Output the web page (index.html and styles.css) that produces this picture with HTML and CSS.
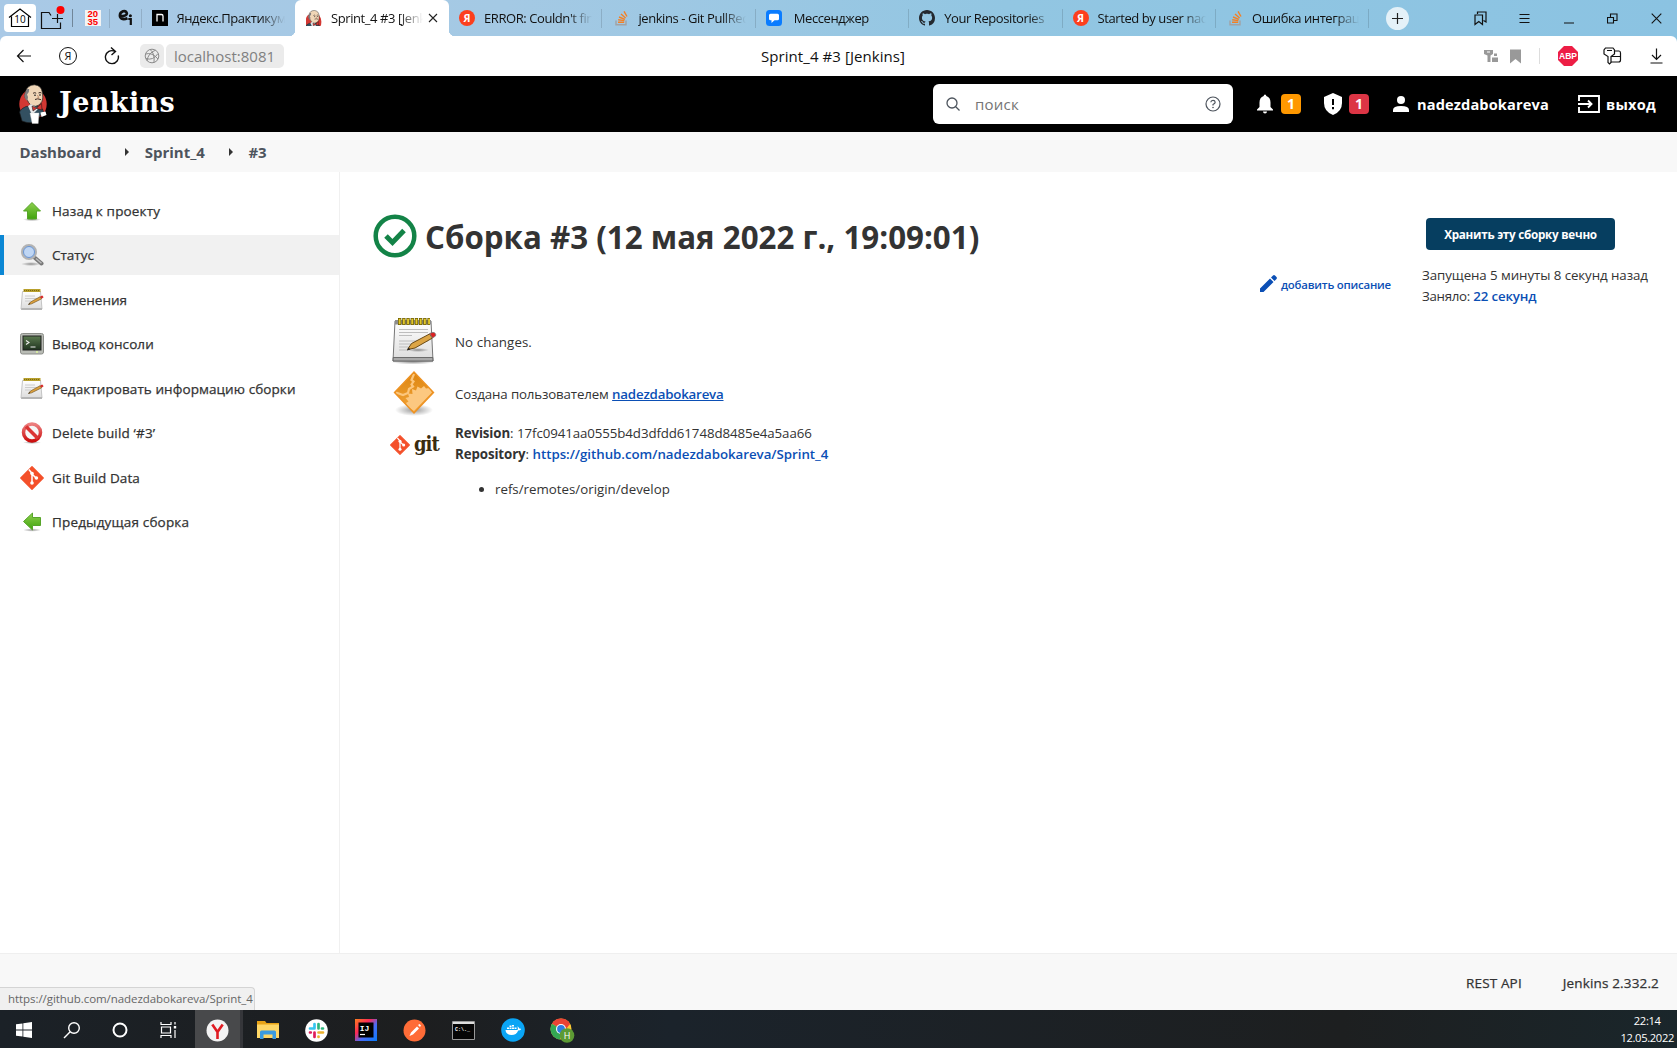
FILE: index.html
```html
<!DOCTYPE html>
<html lang="ru">
<head>
<meta charset="utf-8">
<title>Sprint_4 #3 [Jenkins]</title>
<link rel="stylesheet" href="styles.css">
</head>
<body>
<svg class="defs" width="0" height="0" aria-hidden="true">
  <defs>
    <linearGradient id="green" x1="0" y1="0" x2="0" y2="1"><stop offset="0" stop-color="#8fd04f"/><stop offset="1" stop-color="#3fa30c"/></linearGradient>
    <linearGradient id="paper" x1="0" y1="0" x2="0" y2="1"><stop offset="0" stop-color="#fff"/><stop offset="1" stop-color="#dcdcdc"/></linearGradient>
    <linearGradient id="orange" x1="0" y1="0" x2="0" y2="1"><stop offset="0" stop-color="#dd850f"/><stop offset="1" stop-color="#f2a63c"/></linearGradient>
    <linearGradient id="red" x1="0" y1="0" x2="0" y2="1"><stop offset="0" stop-color="#ec8080"/><stop offset="1" stop-color="#cc0f0f"/></linearGradient>
    <linearGradient id="screen" x1="0" y1="0" x2="0" y2="1"><stop offset="0" stop-color="#5b7a4f"/><stop offset="1" stop-color="#1f331f"/></linearGradient>
    <linearGradient id="ij" x1="0" y1="0" x2="1" y2="1"><stop offset="0" stop-color="#fc801d"/><stop offset=".35" stop-color="#fe2857"/><stop offset=".6" stop-color="#4a6cf7"/><stop offset="1" stop-color="#087cfa"/></linearGradient>
    <radialGradient id="shade"><stop offset="0" stop-color="#000" stop-opacity=".4"/><stop offset="1" stop-color="#000" stop-opacity="0"/></radialGradient>
    <symbol id="notepad-s" viewBox="0 0 24 24">
      <path d="M2.500 3.500h18l1.500 17.500H1z" fill="url(#paper)" stroke="#c4c4c4"/>
      <path d="M1.500 20h20.500v2H1z" fill="#b5b5b5"/>
      <path d="M3.500 1h17v3h-17z" fill="#b8a02c"/><path d="M4 2.500h16" stroke="#7d6a14" stroke-width="1" stroke-dasharray="1 1"/>
      <path d="M5 8h10M5 10.500h12M5 13h6" stroke="#ccc"/>
      <path d="M8.500 16.500l2-2.500 9.500-5.200 1.600 2-10 5z" fill="#dfa23c" stroke="#7a5a25" stroke-width=".7"/>
      <path d="M8.300 16.700l1.800-.6-.8-1.200z" fill="#333"/><path d="M20 8.500l2.300-1 1.300 1.800-2 1.400z" fill="#d62b2b"/>
    </symbol>
    <symbol id="notepad" viewBox="0 0 48 48">
      <ellipse cx="23" cy="45" rx="22" ry="2.500" fill="url(#shade)"/>
      <path d="M5 4h36l2 40H3z" fill="url(#paper)" stroke="#777"/>
      <path d="M3.200 40.500h39.600l.2 3.500H3z" fill="#a9a9a9" stroke="#555" stroke-width=".8"/>
      <path d="M5 3h36v4.500H5z" fill="#8d8d8d"/>
      <path d="M8 4.500h32" stroke="#6b5b00" stroke-width="7" stroke-dasharray="3.300 .9"/>
      <path d="M8.700 4.500h32" stroke="#e0c62a" stroke-width="5.500" stroke-dasharray="1.900 2.300"/>
      <path d="M9 12.500h29M9 15.500h29M9 18.500h13M9 24h29M9 27h20M9 30h12M9 33h9" stroke="#bdbdbd" stroke-width="1.200"/>
      <ellipse cx="28" cy="33" rx="11" ry="2" fill="url(#shade)"/>
      <path d="M17.500 32.500l4-6 18-9.500 3 4L25 31z" fill="#dca545" stroke="#6b4a14"/>
      <path d="M17 33.500l3.500-1-2-2z" fill="#222"/><path d="M39.500 16.500l3.500-1.200q3.500.8 2.500 3.700L42.500 21z" fill="#d22" stroke="#777" stroke-width=".8"/>
    </symbol>
    <symbol id="git" viewBox="0 0 24 24">
      <path d="M12 .8L23.200 12 12 23.200.8 12z" fill="#f4502a" stroke="#f4502a" stroke-width="1.400" stroke-linejoin="round"/>
      <path d="M8.800 3.500L12 7.200v9.800M12 8l4.300 4.300" stroke="#fff" stroke-width="1.500" fill="none"/>
      <circle cx="12" cy="7.500" r="1.800" fill="#fff"/><circle cx="16.400" cy="12" r="1.800" fill="#fff"/><circle cx="12" cy="17" r="1.800" fill="#fff"/>
    </symbol>
    <symbol id="face" viewBox="0 0 28 40">
      <ellipse cx="14" cy="20" rx="13.700" ry="15" fill="#d33833"/>
      <path d="M7 22.500q-5 2-6.500 5.500l2.500 9q6 2.500 10 1.500l8-6.500 3.500-4-1-3-6-3.500z" fill="#335061" stroke="#1c1c1c" stroke-width=".6"/>
      <path d="M6.500 8Q8 1 15.500.8q7 .5 8 8 .8 6-.5 8.500-2 4.500-6.500 5-6-.5-8-6Q4.500 14 6.500 8z" fill="#f0d6b7" stroke="#222" stroke-width=".7"/>
      <path d="M6.300 9q-1.800 3 .4 6.500l1.700 1.500.6-4-1-2.500q2.500-2 2.200-5.500L8.500 5Q6.800 6.500 6.300 9z" fill="#7d7b7d"/>
      <path d="M14 9.300q2-1.300 3.200 0M19.500 9q1.500-1 3 0M16 15.500q2.500-1.500 6 .2" stroke="#3b2b24" fill="none"/>
      <path d="M15 11.200h2M20 11h2" stroke="#222" stroke-width="1"/><path d="M18.500 11l1.300 2.800-1.800.3" stroke="#b37c5c" stroke-width=".8" fill="none"/>
      <path d="M12 20l7 5-6 6-4-9z" fill="#e8e8e8"/>
      <path d="M13 22l4.500 2L22.500 19.500l.5 6.500-5.500-1.500L14 27z" fill="#d33833" stroke="#111" stroke-width=".5"/>
      <path d="M11 29h9l-.8 10.500h-6z" fill="#fff" stroke="#ccc" stroke-width=".4"/><path d="M21.500 28.500l5-1 1 3.500-5 2z" fill="#fff"/>
    </symbol>
    <symbol id="face-head" viewBox="4 0 22 27"><use href="#face" width="28" height="40"/></symbol>
    <symbol id="so" viewBox="0 0 16 16">
      <path d="M2 10.500v4.200h10v-4.200" fill="none" stroke="#a2a2a4" stroke-width="1.400"/>
      <path d="M4 12.300h6.200M4.200 9.800l6.200.8M5 7l5.900 2.300M7 4l4.600 4M10 1.300l3 5.200" stroke="#f48024" stroke-width="1.400" fill="none"/>
    </symbol>
  </defs>
</svg>

<header class="browser">
  <div class="tabs">
    <div class="pin home"><span class="home-box">
      <svg width="24" height="20" viewBox="0 0 24 20"><path d="M3.500 8.500v10h17v-10M1 9.500L12 1l11 8.500" fill="none" stroke="#000" stroke-width="1.200"/><text x="12" y="15" text-anchor="middle" class="home-num">10</text></svg></span></div>
    <div class="pin folder"><svg width="26" height="28" viewBox="0 0 26 28"><path d="M12 11.500l-2-3H2.500v16h19v-6M18.500 10v9M13 14.500h11" fill="none" stroke="#111" stroke-width="1.200"/><circle cx="21.500" cy="6" r="4" fill="#f00"/></svg></div>
    <div class="pin sep fav-cell"><span class="fav fav-2035">20<br>35</span></div>
    <div class="pin sep"><svg width="16" height="18" viewBox="0 0 16 18"><path d="M2 7.200Q9.500 7 8.800 4.200 8 1.600 5 2.300 1.300 3.800 2 7.600 4 11.500 9.500 9.200" fill="none" stroke="#111" stroke-width="2.600"/><path d="M10.300 10h2.500v6" fill="none" stroke="#111" stroke-width="2.200"/><circle cx="12.400" cy="6.800" r="1.500" fill="#111"/></svg></div>
    <div class="tab"><svg class="fav" viewBox="0 0 16 16"><path d="M0 0h16v16H0z"/><path d="M5 11.500v-7h4.500q1.500 0 1.500 1.500v5.500" fill="none" stroke="#fff" stroke-width="1.300"/></svg><span class="label">Яндекс.Практикум</span></div>
    <div class="tab active"><svg class="fav"><use href="#face-head"/></svg><span class="label">Sprint_4 #3 [Jenkins]</span><svg class="close" viewBox="0 0 10 10"><path d="M1 1l8 8M9 1L1 9" stroke="#222" stroke-width="1.100"/></svg></div>
    <div class="tab sep"><span class="fav ya">Я</span><span class="label">ERROR: Couldn't find any</span></div>
    <div class="tab sep so"><svg class="fav"><use href="#so"/></svg><span class="label">jenkins - Git PullRequest</span></div>
    <div class="tab sep msg"><svg class="fav" viewBox="0 0 16 16"><rect width="16" height="16" rx="3.500" fill="#0a7cff"/><path d="M4.500 3.800h7q1.500 0 1.500 1.500v3.400q0 1.500-1.500 1.500H8.500L5.500 13v-2.800h-1Q3 10.200 3 8.700V5.300q0-1.500 1.500-1.500z" fill="#fff"/></svg><span class="label">Мессенджер</span></div>
    <div class="tab sep"><svg class="fav" viewBox="0 0 16 16"><path fill="#24292f" d="M8 0C3.580 0 0 3.580 0 8c0 3.540 2.290 6.530 5.470 7.590.4.070.55-.17.55-.38 0-.19-.01-.82-.01-1.490-2.010.37-2.530-.49-2.690-.94-.09-.23-.48-.94-.82-1.130-.28-.15-.68-.52-.01-.53.63-.01 1.080.58 1.230.82.72 1.210 1.870.87 2.330.66.07-.52.28-.87.51-1.070-1.780-.2-3.640-.89-3.640-3.950 0-.87.31-1.590.82-2.150-.08-.2-.36-1.020.08-2.120 0 0 .67-.21 2.200.82.64-.18 1.320-.27 2-.27s1.360.09 2 .27c1.530-1.040 2.200-.82 2.200-.82.44 1.100.16 1.920.08 2.120.51.56.82 1.270.82 2.150 0 3.070-1.870 3.750-3.650 3.950.29.25.54.73.54 1.480 0 1.070-.01 1.930-.01 2.200 0 .21.15.46.55.38A8.010 8.010 0 0016 8c0-4.420-3.580-8-8-8z"/></svg><span class="label">Your Repositories</span></div>
    <div class="tab sep"><span class="fav ya">Я</span><span class="label">Started by user nadezda</span></div>
    <div class="tab sep so"><svg class="fav"><use href="#so"/></svg><span class="label">Ошибка интеграции</span></div>
    <div class="winctl">
      <span class="plus"><svg width="23" height="23" viewBox="0 0 23 23"><path d="M11.500 6v11M6 11.500h11" stroke="#222" stroke-width="1.200"/></svg></span>
      <svg class="w1" width="13" height="15" viewBox="0 0 13 15"><path d="M3.500 3V1h8.500v10l-2.500-1.500M1 4h7.500v9.500L4.800 10.500 1 13.500z" fill="none" stroke="#111" stroke-width="1.200"/></svg>
      <svg class="w2" width="11" height="11" viewBox="0 0 11 11"><path d="M.5 1.500h10M.5 5.500h10M.5 9.500h10" stroke="#111"/></svg>
      <svg class="w3" width="10" height="11" viewBox="0 0 10 11"><path d="M0 10h10" stroke="#111"/></svg>
      <svg class="w4" width="11" height="11" viewBox="0 0 11 11"><path d="M.5 4.500h6v5.500h-6zM3.500 4.500v-3.500h6.500v6.500H6.500" fill="none" stroke="#111" stroke-width="1.100"/></svg>
      <svg class="w5" width="11" height="11" viewBox="0 0 11 11"><path d="M.7.7l9.600 9.600M10.300.7L.7 10.300" stroke="#111" stroke-width="1.100"/></svg>
    </div>
  </div>
  <div class="toolbar">
    <svg class="t-back" width="16" height="14" viewBox="0 0 16 14"><path d="M15 7H1.500M7.500 1l-6 6 6 6" fill="none" stroke="#111" stroke-width="1.200"/></svg>
    <span class="t-ya">Я</span>
    <svg class="t-rel" width="16" height="18" viewBox="0 0 16 18"><path d="M14.200 8.500A6.500 6.500 0 1 1 10.500 4.200M7 .5l4.500 4L7.500 8" fill="none" stroke="#111" stroke-width="1.400"/></svg>
    <span class="globe"><svg width="16" height="16" viewBox="0 0 16 16"><g fill="none" stroke="#8b8b8b"><circle cx="8" cy="8" r="6.800"/><path d="M1.500 6Q8 4 14 11M3 13Q4 5 11.500 2.200M2 10.500q7 2.500 12-5M6 1.500Q11 5 10 14.500"/></g></svg></span>
    <span class="url">localhost:8081</span>
    <span class="page-title">Sprint_4 #3 [Jenkins]</span>
    <svg class="r1" width="14" height="14" viewBox="0 0 14 14"><path d="M0 1h9v4L6.500 6.500V13H3.500V6.500L0 5z" fill="#999"/><path d="M3 3h3" stroke="#fff"/><path d="M8 8.500h6V13H8zM10 4.500h3V7h-3z" fill="#999"/></svg>
    <svg class="r2" width="11" height="15" viewBox="0 0 11 15"><path d="M0 .5h11v14L5.500 10 0 14.500z" fill="#999"/></svg>
    <span class="tsep"></span>
    <svg class="r3" width="20" height="20" viewBox="0 0 20 20"><path d="M6 0h8l6 6v8l-6 6H6l-6-6V6z" fill="#ed1e45"/><text x="10" y="13.300" text-anchor="middle" textLength="18" lengthAdjust="spacingAndGlyphs" class="abp">ABP</text></svg>
    <svg class="r4" width="19" height="18" viewBox="0 0 19 18"><g fill="none" stroke="#111" stroke-width="1.200"><path d="M2.500 1h7.500L11.500 3v4L8 9.500v6L6.500 17 5 15.500v-6L1 7V3zM4 3.500h5"/><path d="M12 4h4q1.500 0 1.500 2v7q0 2-2 2H8M8 9.500h9.500"/></g></svg>
    <svg class="r5" width="13" height="16" viewBox="0 0 13 16"><path d="M6.500.5v11M2 7l4.500 4.500L11 7M.5 15h12" fill="none" stroke="#111" stroke-width="1.200"/></svg>
  </div>
</header>

<div class="jheader">
  <svg class="logo" width="28" height="40"><use href="#face"/></svg>
  <span class="brand">Jenkins</span>
  <div class="search">
    <svg width="14" height="14" viewBox="0 0 14 14"><circle cx="6" cy="6" r="5" fill="none" stroke="#4d545d" stroke-width="1.300"/><path d="M9.500 9.500l4 4" stroke="#4d545d" stroke-width="1.300"/></svg>
    <span class="ph">поиск</span>
    <svg width="16" height="16" viewBox="0 0 16 16"><circle cx="8" cy="8" r="7" fill="none" stroke="#4d545d" stroke-width="1.200"/><path d="M5.800 6.300Q6 4.300 8 4.300t2.200 1.900Q10.200 7.300 8 8.500v1" fill="none" stroke="#4d545d" stroke-width="1.200"/><circle cx="8" cy="11.500" r=".8" fill="#4d545d"/></svg>
  </div>
  <svg class="bell" width="16" height="20" viewBox="0 0 16 20"><path d="M8 .5q1.300 0 1.300 1.600Q13.500 3.500 13.500 8.500V13l2.500 2.500v1H0v-1L2.500 13V8.500q0-5 4.200-6.400Q6.700.5 8 .5zM6 17.500h4q0 2-2 2t-2-2z" fill="#fff"/></svg>
  <span class="badge orange">1</span>
  <svg class="shield" width="18" height="22" viewBox="0 0 18 22"><path d="M9 0l9 4v6q0 8.500-9 12Q0 18.500 0 10V4z" fill="#fff"/><path d="M9 6v6M9 14v2.200" stroke="#000" stroke-width="2"/></svg>
  <span class="badge red">1</span>
  <svg class="user" width="16" height="16" viewBox="0 0 16 16"><circle cx="8" cy="4" r="4" fill="#fff"/><path d="M0 16v-2q0-4 8-4t8 4v2z" fill="#fff"/></svg>
  <span class="hlink">nadezdabokareva</span>
  <svg class="exit" width="22" height="18" viewBox="0 0 22 18"><path d="M1 6V1h20v16H1v-5M0 9h13.500M10 5.500L13.500 9 10 12.500" fill="none" stroke="#fff" stroke-width="1.900"/></svg>
  <span class="hlink out">выход</span>
</div>

<nav class="crumbs">
  <span>Dashboard</span><b class="arr"></b><span>Sprint_4</span><b class="arr"></b><span>#3</span>
</nav>

<div class="page">
  <aside>
    <a class="task"><svg width="24" height="24" viewBox="0 0 24 24"><ellipse cx="12" cy="20.500" rx="9" ry="1.700" fill="url(#shade)"/><path d="M12 3.500l8.500 8.500h-4v8h-9v-8h-4z" fill="url(#green)" stroke="#57a52a"/></svg><span class="wide">Назад к проекту</span></a>
    <a class="task on"><svg width="24" height="24" viewBox="0 0 24 24"><ellipse cx="11" cy="21" rx="10" ry="2" fill="url(#shade)"/><path d="M14.500 14.500l7 6" stroke="#777" stroke-width="4" stroke-linecap="round"/><path d="M16 15.500l5.500 4.700" stroke="#bbb" stroke-width="1.500"/><circle cx="9" cy="9" r="6.900" fill="#aecdf2" stroke="#b3b3b3" stroke-width="2.200"/><circle cx="9" cy="9" r="5.500" fill="#bfd6f4" stroke="#6b94cf"/></svg><span>Статус</span></a>
    <a class="task"><svg width="24" height="24"><use href="#notepad-s"/></svg><span>Изменения</span></a>
    <a class="task"><svg width="24" height="24" viewBox="0 0 24 24"><rect x=".5" y="1.500" width="23" height="20.500" rx="2" fill="#b9bcb5" stroke="#8b8d88"/><rect x="3" y="4" width="18" height="14" fill="url(#screen)" stroke="#222"/><path d="M6 8.500l3 2-3 2M10.500 15h5" fill="none" stroke="#eee" stroke-width="1.100"/><circle cx="17" cy="20" r=".9" fill="#e5ff9a"/></svg><span class="mid">Вывод консоли</span></a>
    <a class="task"><svg width="24" height="24"><use href="#notepad-s"/></svg><span class="mid">Редактировать информацию сборки</span></a>
    <a class="task"><svg width="24" height="24" viewBox="0 0 24 24"><ellipse cx="12" cy="21.500" rx="9" ry="1.500" fill="url(#shade)"/><circle cx="12" cy="11.500" r="8.500" fill="#f6f6f6" stroke="url(#red)" stroke-width="3.500"/><path d="M6 5.500l12 12" stroke="#db3535" stroke-width="3.500"/></svg><span class="wide">Delete build ‘#3’</span></a>
    <a class="task"><svg width="24" height="24"><use href="#git"/></svg><span class="mid">Git Build Data</span></a>
    <a class="task"><svg width="24" height="24" viewBox="0 0 24 24"><ellipse cx="12" cy="20" rx="9" ry="1.700" fill="url(#shade)"/><path d="M3.500 11.500l9-8.500v4.500h8v8h-8V20z" fill="url(#green)" stroke="#57a52a"/></svg><span class="wide">Предыдущая сборка</span></a>
  </aside>
  <main>
    <section class="left">
      <h1><svg width="44" height="44" viewBox="0 0 44 44"><circle cx="22" cy="22" r="19.300" fill="none" stroke="#138347" stroke-width="4.500"/><path d="M13 22l6.500 6.500L31 16.500" fill="none" stroke="#138347" stroke-width="5"/></svg><span>Сборка #3 (12 мая 2022 г., 19:09:01)</span></h1>
      <div class="row r-changes"><svg width="48" height="48"><use href="#notepad"/></svg><p>No changes.</p></div>
      <div class="row r-user"><svg width="48" height="48" viewBox="0 0 48 48"><ellipse cx="24" cy="41" rx="19" ry="6" fill="url(#shade)"/><path d="M24 3L43.500 23.500 24 44 4.500 23.500z" fill="url(#orange)"/><path d="M24 5l-2.500 6 2 1.500-2 3 1.500 2-4 2.500-1 4-5 2-7-2.500" fill="none" stroke="#fcc67c" stroke-width="2.200"/><path d="M18 38l-2-4 2.500-1.500-3-3.500 3.500-1-1-3.500 4.500.5L22 20l4 1.500 1.500-4 3.500 2 3-2.500 2 2.500 3.500-.5 2.500 4.500L24 42z" fill="#fcc880"/><path d="M24 3L43.500 23.500 24 44 4.500 23.500z" fill="none" stroke="#ee9222" stroke-width="1.400"/></svg><p><span class="c1">Создана пользователем</span> <a class="u">nadezdabokareva</a></p></div>
      <div class="row r-git"><span class="gitlogo"><svg width="20" height="20"><use href="#git"/></svg><em>git</em></span>
        <div class="gitinfo">
          <p><b>Revision</b>: <span class="hash">17fc0941aa0555b4d3dfdd61748d8485e4a5aa66</span></p>
          <p><b>Repository</b>: <a class="repo">https://github.com/nadezdabokareva/Sprint_4</a></p>
          <ul><li>refs/remotes/origin/develop</li></ul>
        </div>
      </div>
    </section>
    <a class="desc"><svg width="17" height="17" viewBox="0 0 17 17"><path d="M0 13.500L10 3.500l3.500 3.500-10 10H0zM11 2.500l2-2q1-.8 2 0L16.500 2q.8 1 0 2l-2 2z" fill="#0b4fb5"/></svg><span>добавить описание</span></a>
    <section class="right">
      <button>Хранить эту сборку вечно</button>
      <p>Запущена 5 минуты 8 секунд назад</p>
      <p><span class="took">Заняло:</span> <a>22 секунд</a></p>
    </section>
  </main>
</div>
<footer>
  <span class="status">https://github.com/nadezdabokareva/Sprint_4</span>
  <span class="f1">REST API</span>
  <span class="f2">Jenkins 2.332.2</span>
</footer>

<div class="taskbar">
  <span class="tb sys"><svg width="16" height="16" viewBox="0 0 16 16"><path d="M0 2.300L6.500 1.400v6.200H0zM7.300 1.300L16 0v7.600H7.300zM0 8.400h6.500v6.200L0 13.700zM7.300 8.400H16V16l-8.700-1.300z" fill="#fff"/></svg></span>
  <span class="tb sys"><svg width="18" height="18" viewBox="0 0 18 18"><circle cx="11" cy="7" r="5.300" fill="none" stroke="#fff" stroke-width="1.400"/><path d="M7.200 10.800L1 17" stroke="#fff" stroke-width="1.400"/></svg></span>
  <span class="tb sys"><svg width="16" height="16" viewBox="0 0 16 16"><circle cx="8" cy="8" r="6.500" fill="none" stroke="#fff" stroke-width="2"/></svg></span>
  <span class="tb sys"><svg width="17" height="16" viewBox="0 0 17 16"><path d="M1 0v2.500h10V0M1 16v-2.500h10V16M1.500 5h9v6h-9zM15 0v2.500M15 8v8" fill="none" stroke="#fff" stroke-width="1.200"/><path d="M13.800 4h2.400v2.500h-2.400z" fill="#fff"/></svg></span>
  <span class="tb cur"><svg width="23" height="23" viewBox="0 0 23 23"><circle cx="11.500" cy="11.500" r="11" fill="#f3f3f3"/><path d="M6.300 5.500l5.200 7.500 5.200-7.500M11.500 12v8" fill="none" stroke="#e01b22" stroke-width="2.600"/></svg></span>
  <span class="tb"><svg width="22" height="20" viewBox="0 0 22 20"><path d="M0 1h8l1.500 2H22v15H0z" fill="#e8a317"/><path d="M0 4.500h22V18H0z" fill="#ffd766"/><path d="M3 12q0-1.500 1.500-1.500h13Q19 10.500 19 12v7h-3.500v-4.500h-9V19H3z" fill="#3a9be0"/></svg></span>
  <span class="tb"><svg width="23" height="23" viewBox="0 0 23 23"><circle cx="11.500" cy="11.500" r="11.300" fill="#fff"/><g stroke-width="2.700" stroke-linecap="round" fill="none"><path d="M9.500 5v4M5 9.500h4.500" stroke="#36c5f0"/><path d="M13.500 5v4.500M18 9.500h-1" stroke="#2eb67d"/><path d="M9.500 13.500V18M5 13.500h.8" stroke="#e01e5a"/><path d="M13.500 13.500H18M13.500 17.500v.5" stroke="#ecb22e"/></g></svg></span>
  <span class="tb"><svg width="22" height="22" viewBox="0 0 22 22"><path d="M0 0h22v22H0z" fill="url(#ij)"/><path d="M3.500 3.500h15v15h-15z"/><path d="M5 15.500h5" stroke="#fff" stroke-width="1.200"/><text x="4.800" y="12" class="ijt">IJ</text></svg></span>
  <span class="tb"><svg width="23" height="23" viewBox="0 0 23 23"><circle cx="11.500" cy="11.500" r="11" fill="#ff6c37"/><path d="M6.500 17l1.500-3.500L14 7.500l2 2-6 6zM15 6l1.500-1 1.500 1.500-1 1.500z" fill="#fff"/></svg></span>
  <span class="tb"><svg width="23" height="19" viewBox="0 0 23 19"><path d="M.5.5h22v18H.5z" fill="#060606" stroke="#999"/><path d="M1 2h21" stroke="#ddd" stroke-width="2"/><text x="3" y="9.500" class="cmdt">C:\._</text></svg></span>
  <span class="tb"><svg width="24" height="24" viewBox="0 0 24 24"><circle cx="12" cy="12" r="11.800" fill="#0aa5f5"/><path d="M4.500 12h12q1-2-.3-3.500 1.500.2 2 2 1.500-.2 2 .5-.8 1.500-3 1.500Q15.500 17 10.500 17q-5.500 0-6-5zM6 9.500h2V11H6zM8.500 9.500h2V11h-2zM11 9.500h2V11h-2zM11 7h2v1.500h-2zM8.500 7.500h2V9h-2zM13.500 9.500h2V11h-2z" fill="#fff"/></svg></span>
  <span class="tb"><svg width="26" height="26" viewBox="0 0 26 26"><circle cx="12" cy="12" r="10.500" fill="#fcc934"/><path d="M12 12L2.900 6.700A10.500 10.500 0 0 1 21.100 6.700z" fill="#ea4335"/><path d="M12 12L2.900 6.700A10.500 10.500 0 0 0 11 22.500z" fill="#34a853"/><path d="M12 6.700h9.200L17 12z" fill="#ea4335"/><circle cx="12" cy="12" r="5" fill="#fff"/><circle cx="12" cy="12" r="3.900" fill="#2f7de1"/><circle cx="18" cy="18.500" r="7.300" fill="#5c9a34"/><text x="18" y="21.800" text-anchor="middle" class="cht">H</text></svg></span>
  <div class="clock"><span>22:14</span><span>12.05.2022</span></div>
</div>
</body>
</html>
```
FILE: styles.css
```css
* { box-sizing: border-box; }
html, body { margin: 0; height: 100%; }
body { font-family: "Open Sans", "Noto Sans", sans-serif; font-size: 13.500px; color: #333; background: #fff; width: 1677px; height: 1048px; overflow: hidden; display: flex; flex-direction: column; }
svg { display: block; flex: none; }
p { margin: 0; white-space: nowrap; }
.defs { position: absolute; }

/* browser chrome */
.browser { flex: none; height: 76px; background: linear-gradient(90deg, #a9c9e6 0, #a4c9e4 30%, #92c6e2 60%, #8bc3e2 100%); }
.tabs { display: grid; grid-template-columns: 38px 35px 36.500px 32px 153.500px 154px repeat(6, 153.400px) 1fr; height: 36px; align-items: center; }
.pin { display: flex; align-items: center; justify-content: center; height: 36px; }
.home-box { display: flex; align-items: center; justify-content: center; width: 32px; height: 28px; border-radius: 4px; background: #fff; margin-left: 2px; }
.home-num { font: 10px "Open Sans", sans-serif; }
.sep { background: linear-gradient(#0002, #0002) right 9px / 1px 19px no-repeat; }
.folder { padding-right: 7px; background: linear-gradient(#0005, #0005) right 9px / 1px 18px no-repeat; }
.fav-cell { padding-left: 3px; }
.fav { width: 16px; height: 16px; flex: none; }
.fav-2035 { background: #f4f4f4; color: #f00; font: bold 9.500px/8px "Liberation Sans", sans-serif; text-align: center; }
.ya { border-radius: 50%; background: #fc3f1d; color: #fff; font-size: 10.500px; font-weight: 700; line-height: 16px; text-align: center; }
.tab { display: flex; align-items: center; height: 36px; padding: 0 10px; gap: 9px; position: relative; min-width: 0; }
.tab .label { flex: 1; min-width: 0; overflow: hidden; white-space: nowrap; font-size: 13px; letter-spacing: -.42px; color: #111; line-height: 20px; -webkit-mask-image: linear-gradient(90deg, #000 calc(100% - 24px), transparent 100%); mask-image: linear-gradient(90deg, #000 calc(100% - 24px), transparent 100%); }
.msg { gap: 12px; }
.so { padding-left: 12px; gap: 8px; }
.active { background: #fff; border-radius: 6px 6px 0 0; padding-left: 11px; }
.active .close { width: 10px; height: 10px; margin-left: -4px; margin-right: 1px; }
.active::before, .active::after { content: ""; position: absolute; bottom: 0; width: 6px; height: 6px; }
.active::before { left: -6px; background: radial-gradient(circle at 0 0, transparent 6px, #fff 6.500px); }
.active::after { right: -6px; background: radial-gradient(circle at 100% 0, transparent 6px, #fff 6.500px); }
.winctl { display: flex; align-items: center; }
.plus { margin-left: 17px; width: 23px; height: 23px; border-radius: 50%; background: #e4f1f8; }
.w1 { margin-left: 65px; } .w2 { margin-left: 32px; } .w3 { margin-left: 34px; } .w4 { margin-left: 33px; } .w5 { margin-left: 33px; }
.toolbar { display: flex; align-items: center; height: 40px; background: #fff; border-radius: 6px 6px 0 0; }
.t-back { margin-left: 16px; }
.t-ya { margin-left: 27px; width: 18px; height: 18px; border: 1.300px solid #111; border-radius: 50%; font-size: 11px; line-height: 15px; text-align: center; color: #111; }
.t-rel { margin-left: 27px; }
.globe { margin-left: 20px; width: 24px; height: 24px; border-radius: 5px; background: #ebebeb; display: flex; align-items: center; justify-content: center; }
.url { margin-left: 2px; width: 118px; height: 24px; padding-left: 8px; border-radius: 5px; background: #ebebeb; color: #808080; font-size: 15px; line-height: 24px; }
.page-title { margin-left: 477px; width: 144px; font-size: 15px; letter-spacing: .07px; color: #111; white-space: nowrap; }
.r1 { margin-left: 579px; } .r2 { margin-left: 12px; } .tsep { margin-left: 18px; width: 1px; height: 16px; background: #ddd; }
.r3 { margin-left: 18px; } .r4 { margin-left: 25px; } .r5 { margin-left: 28px; }
.abp { font: bold 8.500px "Liberation Sans", sans-serif; fill: #fff; }

/* Jenkins header */
.jheader { flex: none; height: 56px; background: #000; display: flex; align-items: center; color: #fff; }
.logo { margin-left: 19px; }
.brand { margin: -3px 0 0 12px; width: 117px; font: bold 27px/30px "DejaVu Serif", serif; letter-spacing: .4px; }
.search { margin-left: 757px; width: 300px; height: 40px; border-radius: 6px; background: #fff; display: flex; align-items: center; padding: 0 12px 0 13px; }
.ph { flex: 1; margin-left: 15px; font-size: 15px; letter-spacing: .24px; color: #757575; }
.bell { margin-left: 24px; }
.badge { width: 20px; height: 20px; border-radius: 4px; font-weight: 700; font-size: 14px; line-height: 20px; text-align: center; }
.orange { background: #ff9800; margin-left: 8px; }
.shield { margin-left: 23px; }
.red { background: #dc3545; margin-left: 7px; }
.user { margin-left: 24px; }
.hlink { margin-left: 8px; width: 132px; white-space: nowrap; font-weight: 700; font-size: 14.600px; letter-spacing: .13px; }
.exit { margin-left: 29px; }
.out { margin-left: 6px; width: auto; letter-spacing: .25px; }
.crumbs { flex: none; height: 40px; background: #f8f8f8; display: flex; align-items: center; padding-left: 19.500px; font-size: 15px; font-weight: 700; color: #4d545d; }
.arr { border: 4px solid transparent; border-left-color: #333; border-right: 0; margin: 0 15.500px 0 24px; }

/* body */
.page { flex: none; height: 781px; display: flex; }
aside { width: 340px; border-right: 1px solid #f0f0f0; padding-top: 19px; display: flex; flex-direction: column; gap: 4.450px; }
.task { height: 40px; padding-left: 20px; display: flex; align-items: center; gap: 8px; font-weight: 500; color: #333; -webkit-text-stroke: .25px #333; }
.wide { letter-spacing: .17px; }
.mid { letter-spacing: .08px; }
.on { background: #f1f1f1; box-shadow: inset 4px 0 #0b87d4; }
main { flex: 1; display: flex; line-height: 21px; font-size: 13.300px; }
.left { flex: none; width: 920px; padding: 42px 0 0 33px; }
h1 { margin: 0; height: 44px; display: flex; align-items: center; gap: 8px; font-size: 31.300px; line-height: 46px; color: #333; font-weight: 700; }
h1 span { padding-top: 2px; white-space: nowrap; }
.row { display: flex; padding-left: 17px; gap: 17px; }
.r-changes { margin-top: 59px; } .r-changes p { padding-top: 15px; letter-spacing: .08px; }
.r-user { margin-top: 4px; } .r-user p { padding-top: 15px; }
.r-git { margin-top: 4px; }
.c1 { letter-spacing: -.15px; }
a { color: #0b4fb5; font-weight: 600; letter-spacing: -.16px; }
.task { letter-spacing: 0; }
.u { text-decoration: underline; letter-spacing: -.2px; }
.gitlogo { width: 48px; height: 20px; display: flex; align-items: center; margin-top: 14px; gap: 4px; }
.gitlogo em { font: bold 20px/20px "DejaVu Serif Condensed", "DejaVu Serif", serif; font-stretch: condensed; letter-spacing: -1px; color: #3a2c10; margin-top: -3px; }
.gitinfo { padding-top: 2px; }
.gitinfo b { letter-spacing: -.1px; }
.hash { letter-spacing: -.1px; }
.repo { letter-spacing: -.03px; }
ul { margin: 14px 0 0; padding-left: 40px; }
.desc { flex: none; width: 162px; padding-top: 102px; display: flex; gap: 4px; font-size: 11.400px; letter-spacing: -.22px; white-space: nowrap; }
.desc svg { margin-top: 1px; }
.right { padding: 46px 0 0; letter-spacing: -.07px; }
.took { letter-spacing: -.3px; }
button { display: block; width: 189px; height: 32px; margin: 0 0 15px 4px; padding: 0; border: 0; border-radius: 4px; background: #063e60; color: #fff; font: 700 11.700px "Open Sans", sans-serif; letter-spacing: -.26px; }

footer { flex: none; height: 57px; background: #f8f8f8; border-top: 1px solid #efefef; display: flex; align-items: center; font-weight: 500; }
.status { align-self: flex-end; width: 255px; height: 23px; padding-left: 8px; border: solid #d4d4d4; border-width: 1px 1px 0 0; border-top-right-radius: 4px; background: #f0f0f0; font-size: 11.500px; letter-spacing: -.06px; font-weight: 400; line-height: 22px; color: #666; white-space: nowrap; }
.f1, .f2 { padding-top: 2px; letter-spacing: .15px; -webkit-text-stroke: .25px #333; }
.f1 { margin-left: 1211px; } .f2 { margin-left: 41px; }

.taskbar { flex: none; height: 38px; background: linear-gradient(90deg, #1b2127, #1d1e1f 25%, #1b232b 40%, #1d1f20 80%, #1a262b); display: flex; align-items: center; color: #fff; }
.tb { width: 49px; height: 38px; padding-top: 2px; display: flex; align-items: center; justify-content: center; }
.sys { width: 48px; }
.cur { width: 48px; margin-left: 3px; background: #48494b; border-right: 3px solid #35363a; }
.clock { margin-left: auto; padding-right: 3px; font-size: 11.200px; letter-spacing: -.35px; line-height: 17px; text-align: center; }
.clock span { display: block; }
.ijt { font: bold 8px "Liberation Mono", monospace; fill: #fff; }
.cmdt { font: bold 5px "Liberation Mono", monospace; fill: #fff; }
.cht { font: 9px "Open Sans", sans-serif; fill: #fff; }
```
